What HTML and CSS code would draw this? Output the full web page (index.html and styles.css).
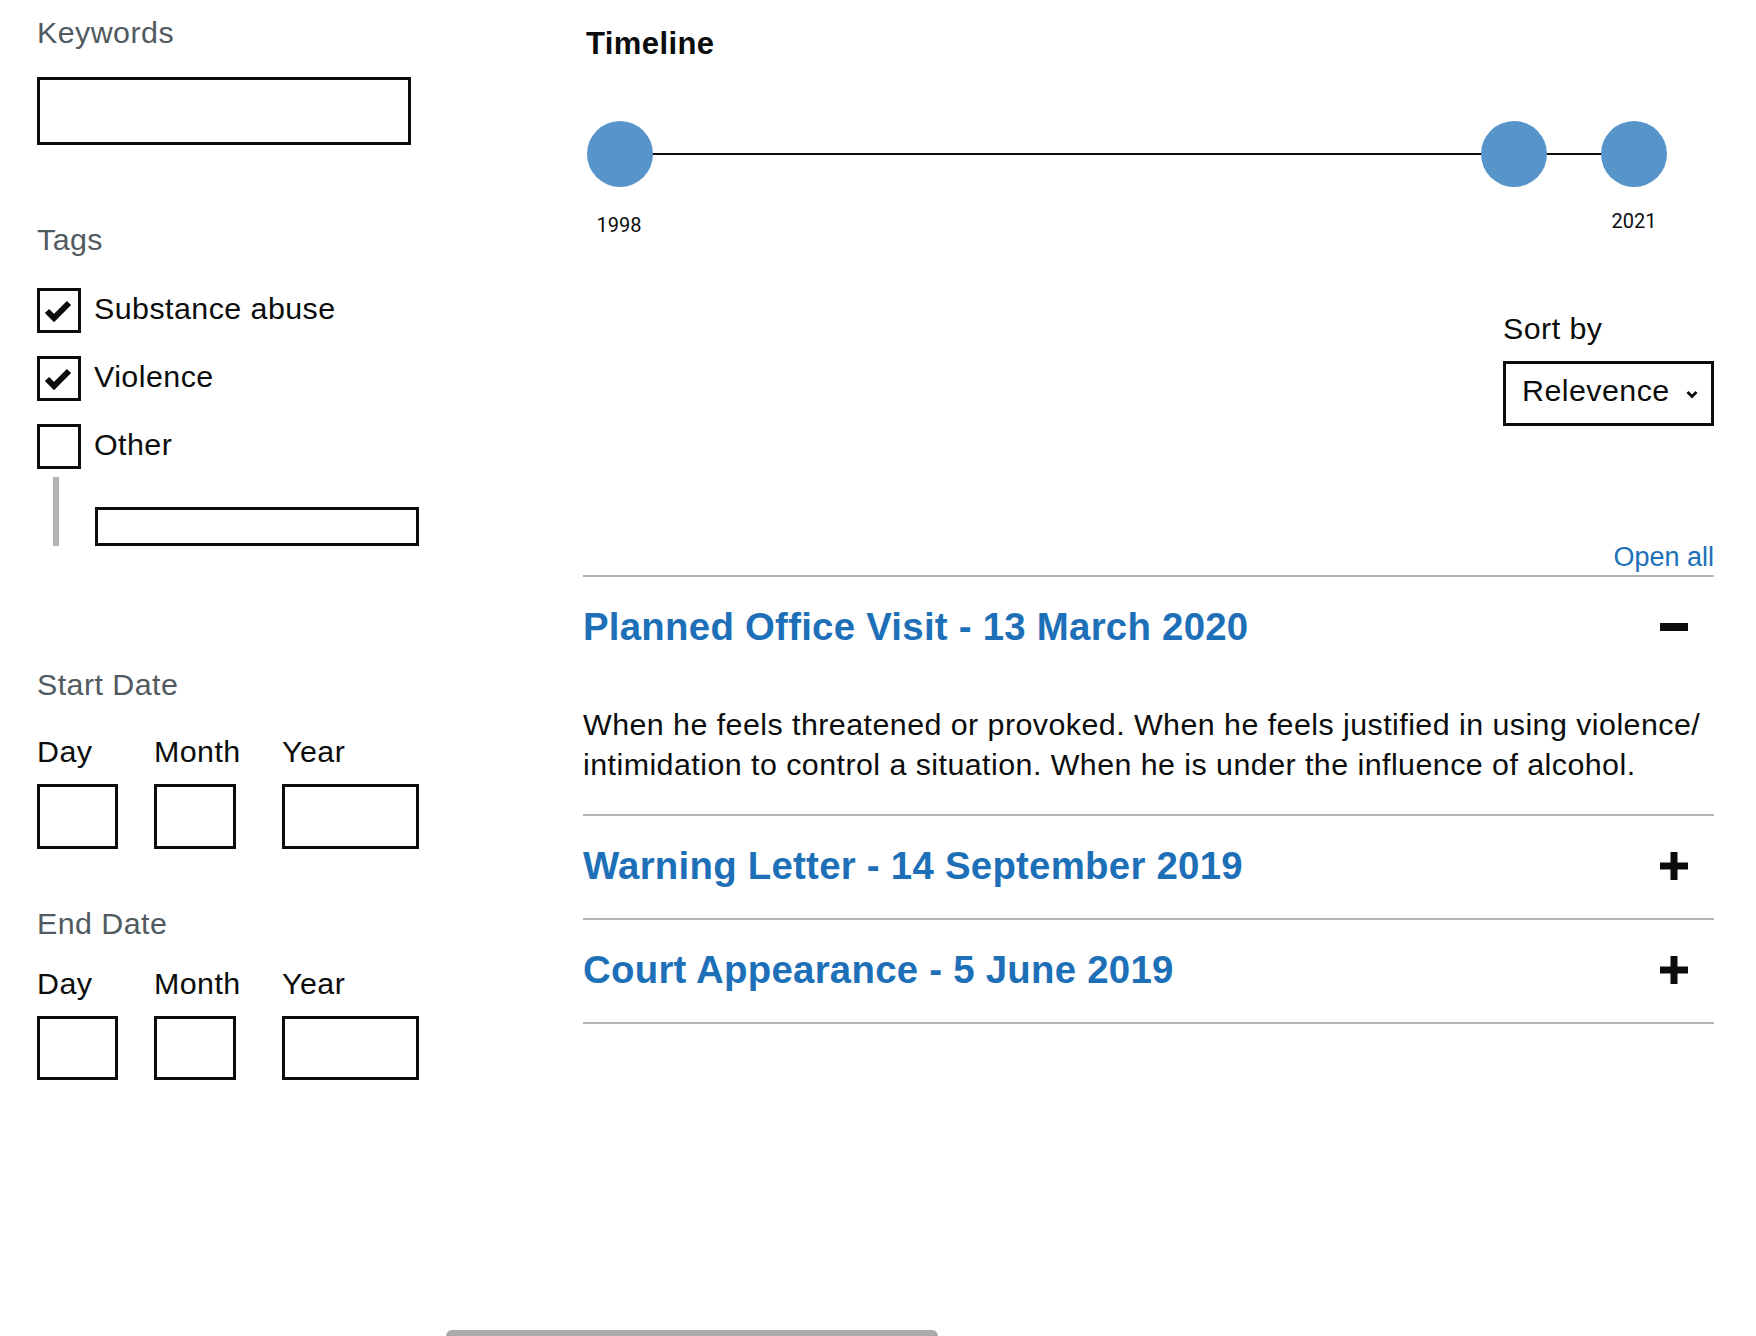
FILE: index.html
```html
<!DOCTYPE html>
<html lang="en">
<head>
<meta charset="utf-8">
<title>Timeline search</title>
<link rel="stylesheet" href="styles.css">
</head>
<body>
<div class="page">
  <aside class="filters">
    <div class="field">
      <label class="field-label" for="keywords">Keywords</label>
      <input class="text-input text-input--keywords" id="keywords" type="text">
    </div>

    <div class="field field--tags">
      <div class="field-label">Tags</div>
      <div class="checkboxes">
        <div class="checkbox">
          <span class="checkbox-box">
            <svg class="checkbox-tick" width="38" height="39" viewBox="0 0 38 39"><polyline points="7,20 14,27 29,12" fill="none" stroke="#0b0c0c" stroke-width="6"/></svg>
          </span>
          <span class="checkbox-label">Substance abuse</span>
        </div>
        <div class="checkbox">
          <span class="checkbox-box">
            <svg class="checkbox-tick" width="38" height="39" viewBox="0 0 38 39"><polyline points="7,20 14,27 29,12" fill="none" stroke="#0b0c0c" stroke-width="6"/></svg>
          </span>
          <span class="checkbox-label">Violence</span>
        </div>
        <div class="checkbox">
          <span class="checkbox-box"></span>
          <span class="checkbox-label">Other</span>
        </div>
      </div>
      <div class="conditional">
        <input class="text-input text-input--other" type="text">
      </div>
    </div>

    <div class="field field--start">
      <div class="field-label">Start Date</div>
      <div class="date-input">
        <div class="date-item date-item--day">
          <span class="date-label">Day</span>
          <input class="text-input date-box date-box--day" type="text">
        </div>
        <div class="date-item date-item--month">
          <span class="date-label">Month</span>
          <input class="text-input date-box date-box--month" type="text">
        </div>
        <div class="date-item date-item--year">
          <span class="date-label">Year</span>
          <input class="text-input date-box date-box--year" type="text">
        </div>
      </div>
    </div>

    <div class="field field--end">
      <div class="field-label">End Date</div>
      <div class="date-input date-input--end">
        <div class="date-item date-item--day">
          <span class="date-label">Day</span>
          <input class="text-input date-box date-box--end date-box--day" type="text">
        </div>
        <div class="date-item date-item--month">
          <span class="date-label">Month</span>
          <input class="text-input date-box date-box--end date-box--month" type="text">
        </div>
        <div class="date-item date-item--year">
          <span class="date-label">Year</span>
          <input class="text-input date-box date-box--end date-box--year" type="text">
        </div>
      </div>
    </div>
  </aside>

  <main class="results">
    <h2 class="timeline-title">Timeline</h2>
    <svg class="timeline" width="1131" height="130" viewBox="0 0 1131 130">
      <line x1="37" y1="44" x2="1051" y2="44" stroke="#0b0c0c" stroke-width="2"/>
      <circle cx="37" cy="44" r="33" fill="#5694ca"/>
      <circle cx="931" cy="44" r="33" fill="#5694ca"/>
      <circle cx="1051" cy="44" r="33" fill="#5694ca"/>
      <text class="timeline-year" x="36" y="122" text-anchor="middle">1998</text>
      <text class="timeline-year" x="1051" y="118" text-anchor="middle">2021</text>
    </svg>

    <div class="sort">
      <div class="sort-label">Sort by</div>
      <div class="select">
        <span class="select-value">Relevence</span>
        <svg class="select-chevron" width="12" height="9" viewBox="0 0 12 9"><polyline points="1.5,2 6,6.5 10.5,2" fill="none" stroke="#0b0c0c" stroke-width="2.8"/></svg>
      </div>
    </div>

    <div class="accordion-controls"><a class="open-all" href="#">Open all</a></div>

    <div class="accordion">
      <section class="acc-section">
        <div class="acc-header">
          <h3 class="acc-heading">Planned Office Visit - 13 March 2020</h3>
          <svg class="acc-icon" width="28" height="8" viewBox="0 0 28 8"><rect width="28" height="8" fill="#0b0c0c"/></svg>
        </div>
        <div class="acc-content">
          <p class="acc-text">When he feels threatened or provoked. When he feels justified in using violence/ intimidation to control a situation. When he is under the influence of alcohol.</p>
        </div>
      </section>
      <section class="acc-section">
        <div class="acc-header">
          <h3 class="acc-heading">Warning Letter - 14 September 2019</h3>
          <svg class="acc-icon" width="28" height="28" viewBox="0 0 28 28"><rect x="0" y="10.5" width="28" height="7" fill="#0b0c0c"/><rect x="10.5" y="0" width="7" height="28" fill="#0b0c0c"/></svg>
        </div>
      </section>
      <section class="acc-section">
        <div class="acc-header">
          <h3 class="acc-heading">Court Appearance - 5 June 2019</h3>
          <svg class="acc-icon" width="28" height="28" viewBox="0 0 28 28"><rect x="0" y="10.5" width="28" height="7" fill="#0b0c0c"/><rect x="10.5" y="0" width="7" height="28" fill="#0b0c0c"/></svg>
        </div>
      </section>
    </div>
  </main>
</div>
<div class="scroll-thumb"></div>
</body>
</html>
```

FILE: styles.css
```css
html, body {
  margin: 0;
  padding: 0;
  background: #ffffff;
}

body {
  font-family: "Liberation Sans", Arial, sans-serif;
  font-size: 30.4px;
  line-height: 40px;
  letter-spacing: 0.45px;
  color: #0b0c0c;
  overflow: hidden;
}

.page {
  display: grid;
  grid-template-columns: 546px 1131px;
  padding: 0 42px 0 37px;
}

/* ---------- filters ---------- */
.filters {
  padding-top: 11.5px;
}

.field-label {
  display: block;
  color: #505a5f;
}

.text-input {
  display: block;
  box-sizing: border-box;
  margin: 0;
  padding: 0 8px;
  border: 3px solid #0b0c0c;
  border-radius: 0;
  background: #ffffff;
  font: inherit;
  outline: none;
}

.text-input--keywords {
  width: 374px;
  height: 68px;
  margin-top: 25.5px;
}

.field--tags {
  margin-top: 73.5px;
}

.checkboxes {
  display: flex;
  flex-direction: column;
  gap: 23px;
  margin-top: 29.5px;
}

.checkbox {
  display: flex;
  align-items: center;
  gap: 13px;
  height: 45px;
}

.checkbox-box {
  box-sizing: border-box;
  width: 44px;
  height: 45px;
  border: 3px solid #0b0c0c;
  flex: none;
}

.checkbox-tick {
  display: block;
}

.checkbox-label {
  padding-bottom: 5px;
}

.conditional {
  margin: 8px 0 0 16px;
  padding: 30px 0 0 36px;
  border-left: 6px solid #b1b4b6;
}

.text-input--other {
  width: 324px;
  height: 39px;
}

.field--start {
  margin-top: 117.5px;
}

.field--end {
  margin-top: 53.5px;
}

.date-input {
  display: flex;
  gap: 36px;
  margin-top: 27px;
}

.date-input--end {
  margin-top: 20px;
}

.date-item {
  display: flex;
  flex-direction: column;
}

.date-item--day { width: 81px; }
.date-item--month { width: 92px; }
.date-item--year { width: 137px; }

.date-label {
  white-space: nowrap;
}

.date-box {
  margin-top: 13.5px;
  height: 65px;
}

.date-box--end {
  margin-top: 13.5px;
  height: 64px;
}

.date-box--day { width: 81px; }
.date-box--month { width: 82px; }
.date-box--year { width: 137px; }

/* ---------- results ---------- */
.results {
  display: flex;
  flex-direction: column;
  padding-top: 23.5px;
}

.timeline-title {
  margin: 0 0 0 3px;
  font-size: 31px;
  line-height: 40px;
  font-weight: 700;
  letter-spacing: 0.4px;
}

.timeline {
  display: block;
  margin-top: 46.5px;
  overflow: visible;
}

.timeline-year {
  font-family: Roboto, "Liberation Sans", sans-serif;
  font-size: 20px;
  letter-spacing: 0;
  fill: #0b0c0c;
}

.sort {
  align-self: flex-end;
  margin-top: 68px;
}

.sort-label {
  margin-bottom: 13px;
}

.select {
  box-sizing: border-box;
  width: 211px;
  height: 65px;
  border: 3px solid #0b0c0c;
  display: flex;
  align-items: center;
  justify-content: space-between;
  padding: 0 13px 7px 16px;
}

.select-chevron {
  display: block;
  margin-top: 8px;
}

.accordion-controls {
  margin-top: 113px;
  text-align: right;
  font-size: 27px;
  line-height: 36px;
  letter-spacing: 0;
}

.open-all {
  color: #1d70b8;
  text-decoration: none;
}

.accordion {
  border-bottom: 2px solid #b1b4b6;
}

.acc-section {
  border-top: 2px solid #b1b4b6;
}

.acc-header {
  display: flex;
  align-items: center;
  justify-content: space-between;
  padding: 26px 26px 28px 0;
}

.acc-heading {
  margin: 0;
  font-size: 38.4px;
  line-height: 48px;
  font-weight: 700;
  letter-spacing: 0.25px;
  color: #1d70b8;
}

.acc-icon {
  display: block;
  flex: none;
}

.acc-content {
  padding: 25px 0 30px;
}

.acc-text {
  margin: 0;
}

.scroll-thumb {
  position: fixed;
  left: 446px;
  bottom: -6px;
  width: 492px;
  height: 12px;
  border-radius: 6px;
  background: #ababab;
}
```
